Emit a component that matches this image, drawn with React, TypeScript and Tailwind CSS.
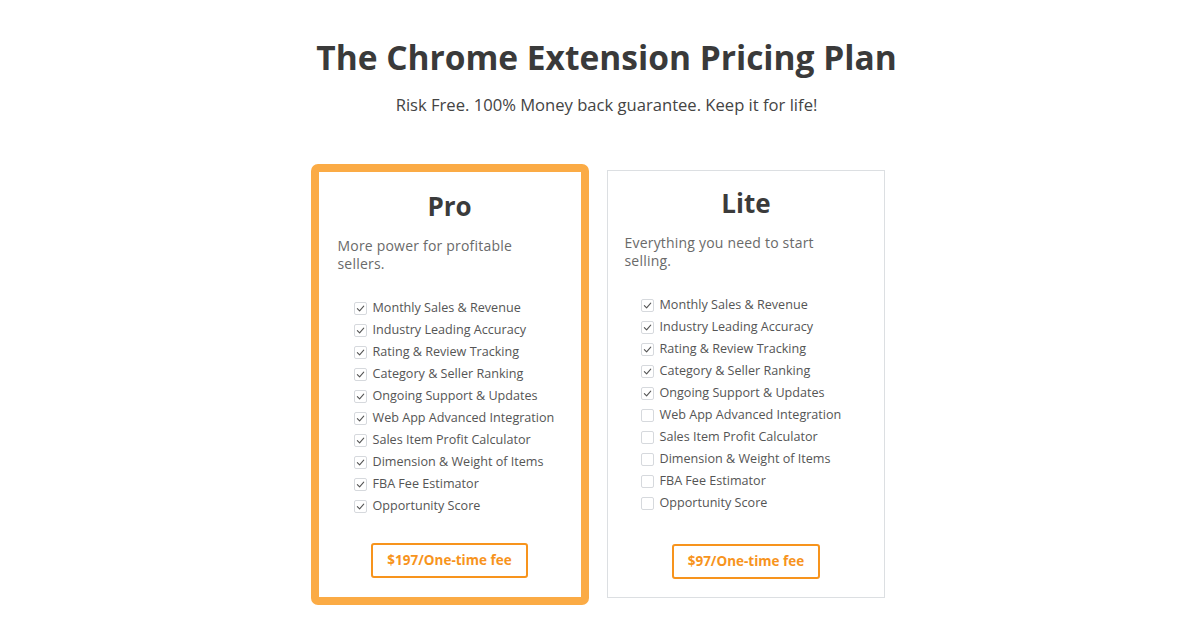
import React from 'react';

const features = [
  'Monthly Sales & Revenue',
  'Industry Leading Accuracy',
  'Rating & Review Tracking',
  'Category & Seller Ranking',
  'Ongoing Support & Updates',
  'Web App Advanced Integration',
  'Sales Item Profit Calculator',
  'Dimension & Weight of Items',
  'FBA Fee Estimator',
  'Opportunity Score',
];

function Box({ checked }: { checked: boolean }) {
  return (
    <span className="flex h-[13px] w-[13px] shrink-0 items-center justify-center rounded-[2px] border border-[#d6d9dd] bg-white">
      {checked && (
        <svg width="9" height="9" viewBox="0 0 10 10" fill="none">
          <path d="M1.5 5.2 L4 7.7 L8.6 2.3" stroke="#555" strokeWidth="1.2" strokeLinecap="round" strokeLinejoin="round" />
        </svg>
      )}
    </span>
  );
}

function Plan({ name, desc, included, price, pro }: { name: string; desc: string; included: number; price: string; pro?: boolean }) {
  return (
    <div
      className={
        pro
          ? 'h-[441px] w-[278px] rounded-[7px] border-[8px] border-[#fbab45] bg-white px-[19px] pt-[18px]'
          : 'mt-[6px] h-[428px] w-[278px] border border-[#dcdfe2] bg-white pt-[16px] pl-[17px] pr-[16px]'
      }
    >
      <h2 className="text-center text-[26px] font-bold leading-[32px] text-[#3b3b3b]">{name}</h2>
      <p className="mt-[15px] w-[200px] text-[14px] leading-[18px] tracking-[0.2px] text-[#6a6a6a]">{desc}</p>
      <ul className="mt-[24px] pl-[16px]">
        {features.map((f, i) => (
          <li key={f} className="flex h-[22px] items-center gap-[6px] whitespace-nowrap text-[12.6px] text-[#555]">
            <Box checked={i < included} />
            <span>{f}</span>
          </li>
        ))}
      </ul>
      <div className={pro ? 'mt-[26px] flex justify-center' : 'mt-[30px] flex justify-center'}>
        <button className="h-[35px] rounded-[3px] border-2 border-[#f7941d] bg-white px-[14px] text-[13.5px] font-bold text-[#f7941d]">
          {price}
        </button>
      </div>
    </div>
  );
}

export default function App() {
  return (
    <div className="min-h-[641px] bg-white pt-[36px]" style={{ fontFamily: '"Open Sans", "Liberation Sans", sans-serif' }}>
      <div className="pl-[10px]">
        <h1 className="text-center text-[33.5px] font-bold leading-[42px] text-[#3a3a3a]">The Chrome Extension Pricing Plan</h1>
        <p className="mt-[16px] text-center text-[16.6px] leading-[22px] text-[#444]">Risk Free. 100% Money back guarantee. Keep it for life!</p>
      </div>
      <div className="mt-[48px] flex items-start justify-center gap-[18px] pr-[8px]">
        <Plan name="Pro" desc="More power for profitable sellers." included={10} price="$197/One-time fee" pro />
        <Plan name="Lite" desc="Everything you need to start selling." included={5} price="$97/One-time fee" />
      </div>
    </div>
  );
}
